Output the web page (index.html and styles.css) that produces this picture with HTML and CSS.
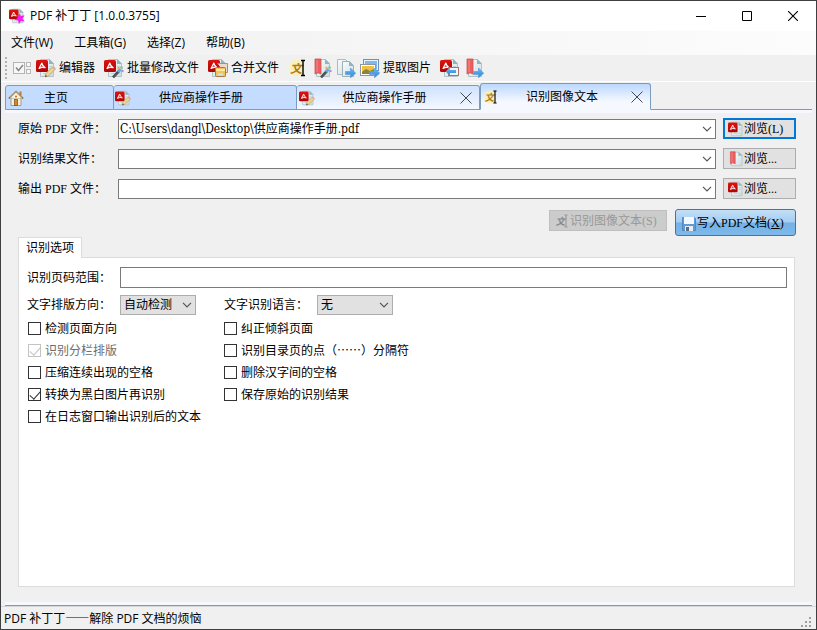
FILE: index.html
```html
<!DOCTYPE html>
<html lang="zh-CN">
<head>
  <meta charset="UTF-8">
  <title>PDF 补丁丁</title>
  <link rel="stylesheet" href="styles.css">
</head>
<body>
  <!-- icon set -->
  <svg class="defs" aria-hidden="true">
    <defs>
      <linearGradient id="gRed" x1="0" y1="0" x2="0" y2="1">
        <stop offset="0" stop-color="#dc1410"/><stop offset="1" stop-color="#b00404"/>
      </linearGradient>
      <linearGradient id="gPage" x1="0" y1="0" x2="1" y2="1">
        <stop offset="0" stop-color="#fbfdfd"/><stop offset="1" stop-color="#cddde1"/>
      </linearGradient>
      <linearGradient id="gBlue" x1="0" y1="0" x2="0" y2="1">
        <stop offset="0" stop-color="#6cb8f2"/><stop offset="1" stop-color="#2f86d6"/>
      </linearGradient>
    </defs>
    <symbol id="page" viewBox="0 0 20 20">
      <path d="M4.500 1.500h9l4 4v13h-13z" fill="url(#gPage)" stroke="#b3c3c7"/>
      <path d="M13 1v5h5z" fill="#8fb5be"/>
    </symbol>
    <symbol id="pdf" viewBox="0 0 20 20">
      <use href="#page"/>
      <path d="M13 8.500h3M13 10.500h3M7 15.500h9" stroke="#c3d1d5"/>
      <rect x="0" y="2" width="12" height="12" rx="1.500" fill="url(#gRed)"/>
      <path d="M5.800 5L3 10.500Q6 8.600 9.200 9.800Q6.600 8.200 5.800 5z" fill="#e0504a" stroke="#fff" stroke-width="1.100" stroke-linejoin="round"/>
    </symbol>
    <symbol id="pencil" viewBox="0 0 20 20">
      <path d="M9 19l1-3.500 6.500-6.500 2.500 2.500-6.500 6.500z" fill="#efd48a" stroke="#b5a075" stroke-width=".8"/>
      <path d="M16.500 8.500l2.700 2.700" stroke="#dfa9a4" stroke-width="2"/>
      <path d="M9 19l.7-2.300 1.600 1.600z" fill="#555"/>
    </symbol>
    <symbol id="wand" viewBox="0 0 20 20">
      <path d="M9 19.500l6-6.500" stroke="#4a525a" stroke-width="2.600"/>
      <path d="M14 14l2.500-2.800" stroke="#6aa6dc" stroke-width="3"/>
      <circle cx="17.500" cy="9.500" r="1.500" fill="#7fcf9c"/><circle cx="14.500" cy="10" r="1.200" fill="#f0a07a"/><circle cx="18.500" cy="13" r="1.200" fill="#b58ad8"/>
    </symbol>
    <symbol id="arrow" viewBox="0 0 20 20">
      <path d="M9.500 13.500h5v-3.500l5.200 5.200-5.200 4.600v-3.300h-5z" fill="url(#gBlue)" stroke="#5a9fdc" stroke-width=".7"/>
    </symbol>
    <symbol id="pdfedit" viewBox="0 0 20 20"><use href="#pdf"/><use href="#pencil"/></symbol>
    <symbol id="pdfbatch" viewBox="0 0 20 20"><use href="#pdf"/><use href="#wand"/></symbol>
    <symbol id="pdfmerge" viewBox="0 0 20 20">
      <use href="#pdf"/>
      <path d="M9.500 5.500h10v9h-3" fill="#ead9cc" stroke="#b98868"/>
      <rect x="7.500" y="9.500" width="10" height="9" rx="1" fill="#f0c552" stroke="#a87845"/>
      <path d="M8 12h9" stroke="#fae9a5" stroke-width="2"/><path d="M10 15.500h5v2h-5z" fill="#d4e4ee"/>
    </symbol>
    <symbol id="halo" viewBox="0 0 20 20"><rect x="2" y="2" width="14" height="16" rx="6" fill="#fff0a0" opacity=".7"/></symbol>
    <symbol id="ibeam" viewBox="0 0 20 20">
      <path d="M13 2.500h4M15 2.500v15M13 17.500h4" fill="none" stroke="currentColor" stroke-width="1.400"/>
    </symbol>
    <symbol id="bookmark" viewBox="0 0 20 20">
      <use href="#page"/>
      <path d="M3 1h6v15l-3-1.200-3 1.200z" fill="#ec5f5f" stroke="#d25050" stroke-width=".8"/>
      <path d="M5 2v12" stroke="#f28a86"/>
    </symbol>
    <symbol id="bookedit" viewBox="0 0 20 20"><use href="#bookmark"/><use href="#wand"/></symbol>
    <symbol id="bookout" viewBox="0 0 20 20"><use href="#bookmark"/><use href="#arrow"/></symbol>
    <symbol id="copy" viewBox="0 0 20 20">
      <path d="M1.500 1.500h8l3 3v12h-11z" fill="url(#gPage)" stroke="#a9bcc1"/>
      <path d="M6.500 3.500h7l4 4v11h-11z" fill="url(#gPage)" stroke="#9bb1b7"/>
      <path d="M13 3v5h5z" fill="#8fb5be"/>
      <use href="#arrow"/>
    </symbol>
    <symbol id="images" viewBox="0 0 20 20">
      <rect x="3.500" y="1.500" width="15" height="11" fill="#7db9ed" stroke="#6b93ba"/>
      <rect x="4.500" y="2.500" width="13" height="9" fill="none" stroke="#e8f4fc"/>
      <rect x=".5" y="6.500" width="15" height="11" fill="#efc044" stroke="#8b98a0"/>
      <rect x="1.500" y="7.500" width="13" height="9" fill="none" stroke="#fff"/>
      <path d="M2 14l4-3 4 2 4-2v5H2z" fill="#8a8234"/>
      <use href="#arrow"/>
    </symbol>
    <symbol id="pdfimg" viewBox="0 0 20 20">
      <use href="#pdf"/>
      <rect x="8.500" y="9.500" width="10" height="8" fill="#edf5fc" stroke="#a87466"/>
      <path d="M5.500 13.500l4.500-4v2.500h6v3h-6v2.500z" fill="url(#gBlue)"/>
    </symbol>
    <symbol id="home" viewBox="0 0 16 16">
      <path d="M3 8h10v7.500H3z" fill="#f7f0dc" stroke="#a89c80"/>
      <path d="M11.500 1.500h2v4h-2z" fill="#b8773d"/>
      <path d="M.8 8.500L8 1.500l7.200 7" fill="none" stroke="#8a6a3e" stroke-width="1.600"/>
      <path d="M3 8l5-5 5 5z" fill="#fbf4e2"/>
      <path d="M2 7.500l6-5.800 6 5.800" fill="none" stroke="#ecc98e" stroke-width=".8"/>
      <rect x="6.500" y="9.500" width="3" height="6" fill="#d8862a" stroke="#7c4c1a" stroke-width=".7"/>
      <circle cx="8" cy="6.500" r="1.100" fill="#c2762e"/>
    </symbol>
    <symbol id="save" viewBox="0 0 16 16">
      <path d="M1.500 2.500h12l1 1v12h-13z" fill="#5f9bdb" stroke="#4a7fbc" stroke-width=".8"/>
      <rect x="3" y="2" width="10" height="7" fill="#f2f8fd"/>
      <rect x="4" y="11" width="8" height="5" fill="#e9edf0"/><rect x="5" y="12" width="3" height="4" fill="#5a6c80"/>
    </symbol>
    <symbol id="checks" viewBox="0 0 20 20">
      <rect x="1.500" y="4.500" width="11" height="11" fill="#f7f7f7" stroke="#b4b4b4"/>
      <path d="M4 9.500l2.500 3L11 7" fill="none" stroke="#8a8a8a" stroke-width="1.600"/>
      <rect x="14.500" y="4.500" width="4" height="4" fill="#f7f7f7" stroke="#b8b8b8"/><rect x="14.500" y="11.500" width="4" height="4" fill="#f7f7f7" stroke="#b8b8b8"/>
    </symbol>
    <symbol id="chev" viewBox="0 0 10 6"><path d="M1 .8l4 4 4-4" fill="none" stroke="#555" stroke-width="1.200"/></symbol>
    <symbol id="cross" viewBox="0 0 12 12"><path d="M.5.5l11 11M11.500.5l-11 11" fill="none" stroke="#333" stroke-width=".9"/></symbol>
    <symbol id="logo" viewBox="0 0 20 20">
      <use href="#pdf"/>
      <path d="M13 6l1.800 4 4.700-1-2.600 4 2.800 4-4.600-.8L12.500 20l-1.200-4.300-4.500-1 3.900-2.300L10.500 8l2 1.500z" fill="#f81ef0"/>
    </symbol>
  </svg>

  <div class="window">
    <header class="titlebar">
      <svg class="i16"><use href="#logo"/></svg>
      <h1>PDF 补丁丁 [1.0.0.3755]</h1>
      <div class="winbtns">
        <button aria-label="最小化"><svg viewBox="0 0 10 10"><path d="M0 5.500h10" stroke="#000"/></svg></button>
        <button aria-label="最大化"><svg viewBox="0 0 10 10"><path d="M.5.5h9v9h-9z" fill="none" stroke="#000"/></svg></button>
        <button aria-label="关闭"><svg viewBox="0 0 10 10"><path d="M0 0l10 10M10 0L0 10" stroke="#000" stroke-width="1.100"/></svg></button>
      </div>
    </header>

    <nav class="menubar">
      <button>文件(W)</button>
      <button>工具箱(G)</button>
      <button>选择(Z)</button>
      <button>帮助(B)</button>
    </nav>

    <div class="toolbar">
      <span class="grip"></span>
      <button aria-label="选择"><svg><use href="#checks"/></svg></button>
      <button class="txt"><svg><use href="#pdfedit"/></svg>编辑器</button>
      <button class="txt"><svg><use href="#pdfbatch"/></svg>批量修改文件</button>
      <button class="txt"><svg><use href="#pdfmerge"/></svg>合并文件</button>
      <button aria-label="识别文本"><svg viewBox="0 0 20 20"><use href="#halo"/><text x="2" y="15" class="glyph">文</text><use href="#ibeam"/></svg></button>
      <button aria-label="编辑书签"><svg><use href="#bookedit"/></svg></button>
      <button aria-label="提取页面"><svg><use href="#copy"/></svg></button>
      <button class="txt"><svg><use href="#images"/></svg>提取图片</button>
      <button aria-label="转换图片"><svg><use href="#pdfimg"/></svg></button>
      <button aria-label="导出书签"><svg><use href="#bookout"/></svg></button>
    </div>

    <div class="tabs">
      <div class="tab home"><svg class="i16"><use href="#home"/></svg><button>主页</button><span class="close"></span></div>
      <div class="tab"><svg class="i16"><use href="#pdfedit"/></svg><button>供应商操作手册</button><span class="close"></span></div>
      <div class="tab hot"><svg class="i16"><use href="#pdfedit"/></svg><button>供应商操作手册</button><button class="close" aria-label="关闭标签"><svg><use href="#cross"/></svg></button></div>
      <div class="tab active"><svg class="i16" viewBox="0 0 20 20"><use href="#halo"/><text x="2" y="15" class="glyph">文</text><use href="#ibeam"/></svg><button>识别图像文本</button><button class="close" aria-label="关闭标签"><svg><use href="#cross"/></svg></button></div>
      <span class="rest"></span>
    </div>

    <main class="content">
      <form class="files">
        <label for="src">原始 PDF 文件：</label>
        <div class="combo"><input id="src" type="text" value="C:\Users\dangl\Desktop\供应商操作手册.pdf"><button type="button" aria-label="展开"><svg><use href="#chev"/></svg></button></div>
        <button type="button" class="btn focus"><svg class="i16"><use href="#pdf"/></svg>浏览(L)</button>

        <label for="res">识别结果文件：</label>
        <div class="combo"><input id="res" type="text"><button type="button" aria-label="展开"><svg><use href="#chev"/></svg></button></div>
        <button type="button" class="btn"><svg class="i16"><use href="#bookmark"/></svg>浏览...</button>

        <label for="out">输出 PDF 文件：</label>
        <div class="combo"><input id="out" type="text"><button type="button" aria-label="展开"><svg><use href="#chev"/></svg></button></div>
        <button type="button" class="btn"><svg class="i16"><use href="#pdf"/></svg>浏览...</button>
      </form>

      <div class="actions">
        <button class="btn" disabled><svg class="i16" viewBox="0 0 20 20"><text x="2" y="15" class="glyph gray">文</text><use href="#ibeam"/></svg>识别图像文本(S)</button>
        <button class="btn primary"><svg class="i16"><use href="#save"/></svg><span>写入PDF文档(<u>X</u>)</span></button>
      </div>

      <section class="options">
        <button class="subtab">识别选项</button>
        <div class="panel">
          <div class="row">
            <label for="range">识别页码范围：</label>
            <input id="range" class="range" type="text">
          </div>
          <div class="row selects">
            <label for="dir">文字排版方向：</label>
            <div class="select"><select id="dir"><option>自动检测</option></select><svg><use href="#chev"/></svg></div>
            <label for="lang" class="second">文字识别语言：</label>
            <div class="select"><select id="lang"><option>无</option></select><svg><use href="#chev"/></svg></div>
          </div>
          <div class="checks">
            <label><input type="checkbox">检测页面方向</label>
            <label><input type="checkbox">纠正倾斜页面</label>
            <label class="off"><input type="checkbox" checked disabled>识别分栏排版</label>
            <label><input type="checkbox">识别目录页的点（……）分隔符</label>
            <label><input type="checkbox">压缩连续出现的空格</label>
            <label><input type="checkbox">删除汉字间的空格</label>
            <label><input type="checkbox" checked>转换为黑白图片再识别</label>
            <label><input type="checkbox">保存原始的识别结果</label>
            <label><input type="checkbox">在日志窗口输出识别后的文本</label>
          </div>
        </div>
      </section>
    </main>

    <footer class="status">
      <span>PDF 补丁丁<span class="cjk">——</span>解除 PDF 文档的烦恼</span>
      <svg class="sizer" viewBox="0 0 12 12"><path d="M8 0h2v2h-2zM4 4h2v2h-2zM8 4h2v2h-2zM0 8h2v2h-2zM4 8h2v2h-2zM8 8h2v2h-2z" fill="#a0a0a0"/></svg>
    </footer>
  </div>
</body>
</html>
```
FILE: styles.css
```css
* { box-sizing: border-box; }
body { margin: 0; font: 12px/16px "Open Sans", "Noto Sans CJK SC", sans-serif; color: #000; }
button, input, select { font: inherit; color: inherit; margin: 0; padding: 0; border-radius: 0; }
button { border: 0; background: none; white-space: nowrap; }
svg { display: block; flex: none; }
.defs { position: absolute; width: 0; height: 0; }
.i16 { width: 16px; height: 16px; }
.glyph { font: italic bold 12px "Noto Sans CJK SC", sans-serif; fill: #b07c14; }
.glyph.gray { fill: #888; }
.cjk { font-family: "Noto Sans CJK SC", sans-serif; }

.window { display: flex; flex-direction: column; min-height: 100vh; border: 1px solid #3d3f40; background: #f0f0f0; }

/* title */
.titlebar { display: flex; align-items: center; height: 30px; padding-left: 8px; gap: 5px; background: #fff; }
.titlebar h1 { flex: 1; margin: 0; font-size: 12px; font-weight: normal; }
.winbtns { display: flex; }
.winbtns button { display: flex; align-items: center; justify-content: center; width: 46px; height: 30px; }
.winbtns svg { width: 10px; height: 10px; }

.menubar { display: flex; height: 24px; padding-left: 10px; gap: 21px; background: linear-gradient(to right, #f0f0f0, #fcfcfc); }

/* toolbar */
.toolbar { display: flex; align-items: center; height: 27px; border-bottom: 1px solid #fff; padding-left: 4px; }
.toolbar svg { width: 20px; height: 20px; }
.toolbar button { display: flex; align-items: center; gap: 3px; padding: 0 2px; }
.toolbar .txt { padding-right: 7px; }
.grip { width: 2px; height: 22px; margin-right: 3px; background: repeating-linear-gradient(#b0b0b0 0 2px, transparent 2px 4px); }

/* document tabs */
.tabs { display: flex; align-items: flex-end; height: 28px; padding: 0 4px; }
.tab { display: flex; align-items: center; width: 183px; height: 25px; padding: 0 2px 0 1px; border: 1px solid #7a9cbf; border-left-width: 0; border-radius: 3px 3px 0 0; background: #c4dcff; }
.tab button { flex: 1; }
.tab .close { flex: none; width: 23px; padding-left: 6px; }
.tab .close svg { width: 12px; height: 12px; }
.tab.home { width: 109px; padding-left: 2px; border-left-width: 1px; }
.tab.hot { padding-left: 2px; background: linear-gradient(#cfe2ff, #f5f8ff); }
.tab.active { width: 171px; height: 27px; padding-left: 2px; border-left-width: 1px; border-bottom-color: #f5f8ff; background: linear-gradient(#bcd8ff, #f5f8ff 70%); }
.rest { flex: 1; height: 1px; background: #7a9cbf; }

.content { flex: 1; display: flex; flex-direction: column; margin: 0 4px; padding: 8px 16px 18px 13px; border: solid #7a9cbf; border-width: 0 0 1px; box-shadow: inset 0 3px #f5f8ff, inset 0 -3px #f5f8ff; }
.content { font-family: "Liberation Serif", "Noto Sans CJK SC", serif; }

.files { display: grid; grid-template-columns: 93px 1fr 73px; column-gap: 7px; row-gap: 9px; align-items: end; }
.files label { align-self: center; white-space: nowrap; }
.combo { display: flex; height: 20px; border: 1px solid #7a7a7a; background: #fff; }
.combo input { flex: 1; min-width: 0; padding: 0 1px; border: 0; outline: 0; font-family: "DejaVu Serif Condensed", "Noto Sans CJK SC", serif; }
.combo button { padding: 0 3px; }
.combo svg { width: 10px; height: 6px; }
.btn { display: flex; align-items: center; height: 21px; padding: 0 4px; border: 1px solid #adadad; background: #e1e1e1; }
.btn.focus { border: 2px solid #0078d7; padding: 0 3px; }

.actions { display: flex; justify-content: flex-end; align-items: flex-start; gap: 8px; margin-top: 10px; }
.actions .btn { width: 118px; }
.actions .btn:disabled { margin-top: 1px; border-color: #bfbfbf; background: #ccc; color: #999; }
.actions .primary { width: 121px; height: 27px; padding-left: 5px; border: 1px solid #53708c; border-radius: 3px; background: linear-gradient(#c2dff7, #a4cdf0 48%, #74b1e5 52%, #7db9ea); }

/* options page */
.options { flex: 1; display: flex; flex-direction: column; align-items: flex-start; margin: 1px 1px 0 0; }
.subtab { position: relative; height: 21px; margin-bottom: -1px; padding: 0 7px; border: 1px solid #dcdcdc; border-bottom: 0; background: #fff; }
.panel { flex: 1; align-self: stretch; padding: 9px 7px 9px 8px; border: 1px solid #dcdcdc; background: #fff; }
.row { display: flex; align-items: center; height: 21px; }
.row label { width: 93px; }
.range { flex: 1; height: 21px; border: 1px solid #7a7a7a; }
.selects { margin-top: 6px; }
.select { position: relative; width: 76px; }
.select select { display: block; width: 100%; height: 20px; padding: 0 3px; border: 1px solid #adadad; background: #e1e1e1; appearance: none; }
.select svg { position: absolute; right: 4px; top: 7px; width: 10px; height: 6px; pointer-events: none; }
.second { margin-left: 28px; }

.checks { display: grid; grid-template-columns: 196px 1fr; grid-auto-rows: 22px; padding: 2px 0 0 1px; font-family: "Noto Sans CJK SC", sans-serif; }
.checks label { display: flex; align-items: center; gap: 4px; white-space: nowrap; }
.checks input { appearance: none; display: flex; justify-content: center; width: 13px; height: 13px; border: 1px solid #333; background: #fff; }
.checks input:checked::after { content: ""; width: 5px; height: 9px; border: solid #333; border-width: 0 1px 1px 0; transform: rotate(42deg); }
.off { color: #6d6d6d; }
.checks .off input, .checks .off input::after { border-color: #c4c4c4; }

.status { display: flex; align-items: center; justify-content: space-between; height: 23px; padding: 0 3px; border-top: 1px solid #d7d7d7; }
.sizer { width: 12px; height: 12px; align-self: flex-end; }
```
